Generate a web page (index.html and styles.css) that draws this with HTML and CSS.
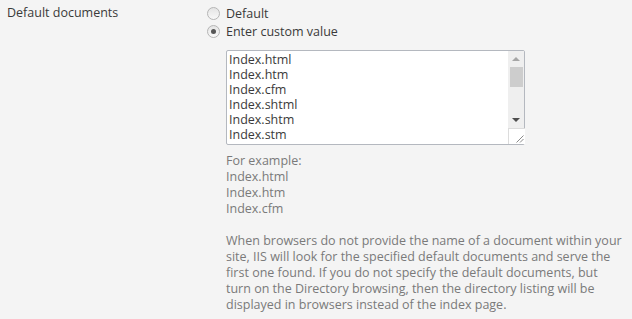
FILE: index.html
```html
<!DOCTYPE html>
<html lang="en">
<head>
    <meta charset="UTF-8">
    <title>Default documents</title>
    <link rel="stylesheet" href="styles.css">
</head>
<body>
    <div class="setting-row">
        <div class="setting-label">Default documents</div>
        <div class="setting-value">
            <label class="radio-option">
                <input type="radio" name="defaultDocs" value="default">
                <span>Default</span>
            </label>
            <label class="radio-option">
                <input type="radio" name="defaultDocs" value="custom" checked>
                <span>Enter custom value</span>
            </label>

            <div class="docs-box">
                <textarea class="docs-input" spellcheck="false">Index.html
Index.htm
Index.cfm
Index.shtml
Index.shtm
Index.stm
Index.php
Index.asp
Index.aspx
Default.html
Default.htm
Default.asp
Default.aspx
Default.php</textarea>
                <div class="scrollbar">
                    <div class="scroll-btn"><span class="arrow-up"></span></div>
                    <div class="scroll-track"><div class="scroll-thumb"></div></div>
                    <div class="scroll-btn"><span class="arrow-down"></span></div>
                    <div class="scroll-corner">
                        <svg width="9" height="9" viewBox="0 0 9 9">
                            <path d="M8.5 1.5 L1.5 8.5 M8.5 5 L5 8.5" stroke="#8a8a8a" stroke-width="1" fill="none"/>
                        </svg>
                    </div>
                </div>
            </div>

            <div class="hint">
                For example:<br>Index.html<br>Index.htm<br>Index.cfm<br><br>
                When browsers do not provide the name of a document within your site, IIS will look for the specified default documents and serve the first one found. If you do not specify the default documents, but turn on the Directory browsing, then the directory listing will be displayed in browsers instead of the index page.
            </div>
        </div>
    </div>
</body>
</html>
```

FILE: styles.css
```css
body {
    background-color: #f4f4f4;
    color: #3a3a3a;
    font-family: 'Open Sans', 'Lato', sans-serif;
    font-size: 12.5px;
    line-height: 15px;
    margin: 0;
}
.setting-row {
    display: grid;
    grid-template-columns: 200px 1fr;
    padding: 5px 0 0 7px;
}
.setting-value {
    display: flex;
    flex-direction: column;
    align-items: flex-start;
}
.radio-option {
    display: flex;
    align-items: center;
    gap: 6px;
    height: 20px;
    margin-top: -2px;
    cursor: pointer;
}
.radio-option input[type="radio"] {
    appearance: none;
    -webkit-appearance: none;
    width: 13px;
    height: 13px;
    margin: 0;
    border: 1px solid #b5b5b5;
    border-radius: 50%;
    background: linear-gradient(#e4e4e4, #f8f8f8);
    position: relative;
}
.radio-option input[type="radio"]:checked::after {
    content: "";
    position: absolute;
    left: 3px;
    top: 3px;
    width: 5px;
    height: 5px;
    border-radius: 50%;
    background: #555;
}

.docs-box {
    display: flex;
    margin: 9px 0 0 19px;
    width: 299px;
    height: 95px;
    box-sizing: border-box;
    border: 1px solid #b4b8bf;
    border-radius: 2px;
    background: #ffffff;
}
.docs-input {
    flex: 1;
    min-width: 0;
    margin: 0;
    padding: 1px 2px;
    border: none;
    background: transparent;
    color: #3a3a3a;
    font-family: inherit;
    font-size: 12.5px;
    line-height: 15px;
    overflow: hidden;
    resize: none;
    outline: none;
}
.scrollbar {
    width: 16px;
    display: flex;
    flex-direction: column;
    background: #efefef;
}
.scroll-btn {
    height: 16px;
    display: flex;
    align-items: center;
    justify-content: center;
}
.arrow-up {
    width: 0;
    height: 0;
    border-left: 4px solid transparent;
    border-right: 4px solid transparent;
    border-bottom: 4px solid #a6a6a6;
}
.arrow-down {
    width: 0;
    height: 0;
    border-left: 4px solid transparent;
    border-right: 4px solid transparent;
    border-top: 4px solid #4d4d4d;
}
.scroll-track {
    flex: 1;
    padding: 0 1px 0 2px;
}
.scroll-thumb {
    height: 20px;
    background: #cdcdcd;
}
.scroll-corner {
    height: 16px;
    box-sizing: border-box;
    border-top: 1px solid #dcdcdc;
    border-left: 1px solid #dcdcdc;
    background: #ffffff;
    display: flex;
    align-items: flex-end;
    justify-content: flex-end;
    margin-right: -1px;
}
.scroll-corner svg {
    display: block;
    margin: 0 1px 1px 0;
}

.hint {
    margin: 8px 0 0 19px;
    width: 397px;
    color: #7a7a7a;
    line-height: 16px;
}
```
